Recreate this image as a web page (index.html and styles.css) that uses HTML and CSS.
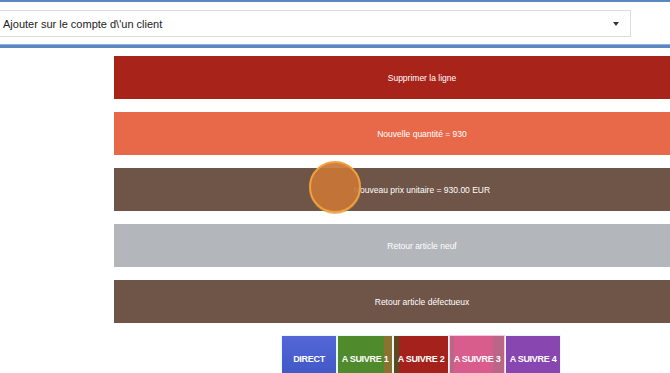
FILE: index.html
```html
<!DOCTYPE html>
<html lang="fr">
<head>
    <meta charset="UTF-8">
    <meta name="viewport" content="width=device-width, initial-scale=1.0">
    <title>Actions ligne</title>
    <link rel="stylesheet" href="styles.css">
</head>
<body>
    <div class="top-bar"></div>

    <!-- Client select -->
    <div class="select-row">
        <div class="select-box">
            <span>Ajouter sur le compte d\'un client</span>
            <span class="caret"></span>
        </div>
    </div>
    <div class="sep-bar"></div>

    <!-- Line actions -->
    <div class="actions">
        <button class="action red">Supprimer la ligne</button>
        <button class="action orange">Nouvelle quantité = 930</button>
        <button class="action brown">Nouveau prix unitaire = 930.00 EUR</button>
        <button class="action gray">Retour article neuf</button>
        <button class="action brown">Retour article défectueux</button>
    </div>

    <!-- Destination tabs -->
    <div class="tabs">
        <button class="tab direct">DIRECT</button>
        <button class="tab suivre1">A SUIVRE 1</button>
        <button class="tab suivre2">A SUIVRE 2</button>
        <button class="tab suivre3">A SUIVRE 3</button>
        <button class="tab suivre4">A SUIVRE 4</button>
    </div>

    <!-- Click highlight -->
    <div class="click-dot"></div>
</body>
</html>
```

FILE: styles.css
```css
/* --- Page --- */
body {
    margin: 0;
    width: 670px;
    height: 373px;
    overflow: hidden;
    position: relative;
    background: #fff;
    font-family: "Liberation Sans", Arial, sans-serif;
}

.top-bar {
    height: 2px;
    background: #5b88c2;
}

/* --- Select --- */
.select-row {
    padding: 8px 0 0 0;
    height: 34px;
}

.select-box {
    box-sizing: border-box;
    width: 631px;
    height: 27px;
    border: 1px solid #dcdcdc;
    border-left: none;
    display: flex;
    align-items: center;
    justify-content: space-between;
    padding: 0 11px 0 3px;
    font-size: 11px;
    color: #222;
}

.caret {
    width: 0;
    height: 0;
    border-left: 3.5px solid transparent;
    border-right: 3.5px solid transparent;
    border-top: 4px solid #333;
}

.sep-bar {
    height: 3px;
    background: #5b88c2;
    border-top: 1px solid #8fb0da;
}

/* --- Action buttons --- */
.actions {
    display: flex;
    flex-direction: column;
    gap: 13px;
    margin-left: 114px;
    padding-top: 8px;
}

.action {
    height: 43px;
    border: none;
    margin: 0;
    padding: 0 0 0 60px;
    color: #fff;
    font-family: "Liberation Sans", Arial, sans-serif;
    font-size: 8.5px;
    text-align: center;
}

.red { background: #a8231a; }
.orange { background: #e8694a; }
.brown { background: #6f5448; }
.gray { background: #b3b7bb; }

/* --- Tabs --- */
.tabs {
    display: flex;
    gap: 2px;
    padding: 13px 0 0 282px;
}

.tab {
    width: 54px;
    height: 46px;
    border: none;
    margin: 0;
    padding: 0;
    color: #fff;
    font-family: "Liberation Sans", Arial, sans-serif;
    font-weight: bold;
    font-size: 9px;
    letter-spacing: -0.3px;
    white-space: nowrap;
    box-shadow: 0 0 0 1px #e6fbf6;
}

.direct { background: linear-gradient(#5566d6, #3e56c4); }
.suivre1 { background: linear-gradient(90deg, #4f8a2c 85%, #8c7230 85%); }
.suivre2 { background: linear-gradient(90deg, #5c4a22 10%, #a4221b 10%); }
.suivre3 {
    background: linear-gradient(90deg, #b96687 8%, #d85d8c 8%, #d85d8c 80%, #b96687 80%);
    box-shadow: 0 0 0 1px #ffc6e2;
}
.suivre4 { background: #8846b0; }

/* --- Click highlight --- */
.click-dot {
    position: absolute;
    left: 309px;
    top: 161px;
    width: 48px;
    height: 48px;
    border-radius: 50%;
    border: 2px solid #f0a03c;
    background: rgba(200, 118, 55, 0.92);
    box-shadow: 0 1px 0 0 rgba(180, 160, 60, 0.6);
}
```
